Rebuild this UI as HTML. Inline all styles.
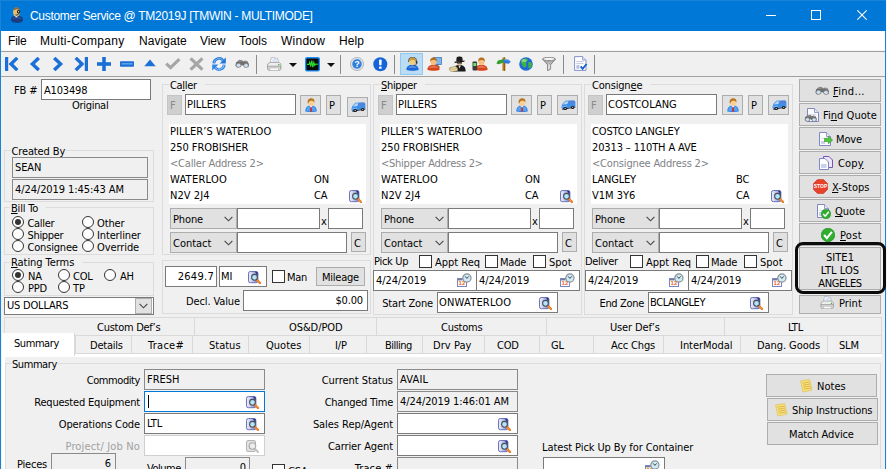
<!DOCTYPE html>
<html lang="en"><head><meta charset="utf-8"><title>Customer Service @ TM2019J [TMWIN - MULTIMODE]</title>
<style>
html,body{margin:0;padding:0;}
body{width:887px;height:469px;overflow:hidden;background:#f0f0f0;position:relative;}
#w{position:absolute;left:0;top:0;width:887px;height:469px;overflow:hidden;background:#f0f0f0;}
#w div,#w svg{position:absolute;box-sizing:border-box;}
.t{font:11px/13px "DejaVu Sans Condensed","Liberation Sans",sans-serif;color:#000;white-space:pre;letter-spacing:-0.15px;}
.g{color:#6d6d6d;}
.d{color:#a0a0a0;}
.m{font:12px/15px "Liberation Sans",sans-serif;color:#000;white-space:pre;letter-spacing:0.25px;}
.in{background:#fff;border:1px solid #7a7a7a;}
.ro{background:#f0f0f0;border:1px solid #8a8a8a;}
.dis{background:#fff;border:1px solid #cfcfcf;}
.b{background:#e1e1e1;border:1px solid #adadad;}
.gb{border:1px solid #dcdcdc;}
.lb{background:#f0f0f0;padding:0 1px;}
.wh{background:#fff;}
.cb{background:#fff;border:1px solid #333;width:13px;height:13px;}
.rb{background:#fff;border:1px solid #333;width:12px;height:12px;border-radius:50%;}
.rb i{position:absolute;left:2px;top:2px;width:6px;height:6px;border-radius:50%;background:#333;display:block;}
.tab{border:1px solid #d9d9d9;background:#f0f0f0;}
u{text-decoration:underline;text-underline-offset:1px;}
</style></head><body><div id="w">
<svg width="0" height="0" style="left:0;top:0"><defs><linearGradient id="dbg" x1="0" x2="1" y1="0" y2="0"><stop offset="0" stop-color="#eef0fa"/><stop offset="0.35" stop-color="#cfd3ee"/><stop offset="1" stop-color="#6c75c0"/></linearGradient></defs></svg>
<div class="" style="left:0px;top:0px;width:886px;height:31px;background:#0078d7;border-top:1px solid #1883d7;"></div>
<svg class="ic" style="left:11px;top:7px" width="12" height="16" viewBox="0 0 12 16"><path d="M0 12.6 C0 9.6 2.6 8.6 6 9 C9.4 8.6 12 9.6 12 12.6 C12 15 9.4 16 6 16 C2.6 16 0 15 0 12.6 Z" fill="#1b3c80"/><path d="M1.5 12 C2.5 10.4 4.4 10 6 10.2 C7.6 10 9.5 10.4 10.5 12 C9 11.4 7.5 11.2 6 11.3 C4.5 11.2 3 11.4 1.5 12 Z" fill="#3a64b4"/><path d="M3.4 8.6 L5.4 10.6 L7.4 8.6 Z" fill="#f4f0e4"/><ellipse cx="5.4" cy="5" rx="3.3" ry="4.6" fill="#e6bf6e"/><path d="M2.2 4 C2.2 1.2 3.8 0.3 5.4 0.3 C7.4 0.3 8.8 1.4 8.8 4 C7.8 2.6 6.4 2.2 5.2 2.4 C3.8 2.5 2.8 3 2.2 4 Z" fill="#8a6a3c"/><circle cx="7.6" cy="4.8" r="1.7" fill="#1a1a1a"/><circle cx="7.6" cy="4.8" r="0.7" fill="#ddd"/><path d="M7.6 6.4 C7.4 8 6 8.2 4.6 7.8" fill="none" stroke="#1a1a1a" stroke-width="0.9"/></svg>
<div class="m" style="left:30px;top:9px;color:#fff;letter-spacing:-0.3px;">Customer Service @ TM2019J [TMWIN - MULTIMODE]</div>
<div class="" style="left:766px;top:15px;width:10px;height:1px;background:#fff;"></div>
<div class="" style="left:811px;top:10px;width:10px;height:10px;border:1px solid #fff;"></div>
<svg class="ic" style="left:857px;top:10px" width="10" height="10" viewBox="0 0 10 10"><path d="M0.3 0.3 L9.7 9.7 M9.7 0.3 L0.3 9.7" stroke="#fff" stroke-width="1.1" fill="none"/></svg>
<div class="" style="left:1px;top:31px;width:884px;height:19px;background:#fff;"></div>
<div class="" style="left:1px;top:50px;width:884px;height:1px;background:#f4f4f4;"></div>
<div class="" style="left:1px;top:51px;width:884px;height:1px;background:#a0a0a0;"></div>
<div class="m" style="left:8px;top:34px;letter-spacing:-0.2px;">File</div>
<div class="m" style="left:40px;top:34px;letter-spacing:0.3px;">Multi-Company</div>
<div class="m" style="left:139px;top:34px;letter-spacing:0.05px;">Navigate</div>
<div class="m" style="left:200px;top:34px;letter-spacing:-0.1px;">View</div>
<div class="m" style="left:239px;top:34px;letter-spacing:0.0px;">Tools</div>
<div class="m" style="left:281px;top:34px;letter-spacing:0.25px;">Window</div>
<div class="m" style="left:339px;top:34px;letter-spacing:0.1px;">Help</div>
<div class="" style="left:1px;top:76px;width:884px;height:1px;background:#a0a0a0;"></div>
<svg class="ic" style="left:5px;top:57px" width="14" height="14" viewBox="0 0 14 14"><rect x="0" y="0" width="3.2" height="14" fill="#1b6fd6"/><path d="M12.3 0.9 L6 7 L12.3 13.1" fill="none" stroke="#1b6fd6" stroke-width="3.4"/></svg>
<svg class="ic" style="left:29px;top:57px" width="12" height="14" viewBox="0 0 12 14"><path d="M9.8 0.9 L3.4 7 L9.8 13.1" fill="none" stroke="#1b6fd6" stroke-width="3.4"/></svg>
<svg class="ic" style="left:52px;top:57px" width="12" height="14" viewBox="0 0 12 14"><path d="M2.2 0.9 L8.6 7 L2.2 13.1" fill="none" stroke="#1b6fd6" stroke-width="3.4"/></svg>
<svg class="ic" style="left:74px;top:57px" width="14" height="14" viewBox="0 0 14 14"><rect x="10.8" y="0" width="3.2" height="14" fill="#1b6fd6"/><path d="M1.7 0.9 L8 7 L1.7 13.1" fill="none" stroke="#1b6fd6" stroke-width="3.4"/></svg>
<svg class="ic" style="left:97px;top:57px" width="14" height="14" viewBox="0 0 14 14"><rect x="5.2" y="0" width="3.6" height="14" fill="#1b6fd6"/><rect x="0" y="5.2" width="14" height="3.6" fill="#1b6fd6"/></svg>
<svg class="ic" style="left:120px;top:61px" width="14" height="6" viewBox="0 0 14 6"><rect x="0" y="0.3" width="14" height="5.4" rx="0.8" fill="#1b6fd6"/><rect x="1.5" y="2" width="11" height="1.6" fill="#5c9ee8"/></svg>
<svg class="ic" style="left:144px;top:59px" width="12" height="8" viewBox="0 0 12 8"><path d="M0.3 7.3 L6 0.6 L11.7 7.3 Z" fill="#1b6fd6"/></svg>
<svg class="ic" style="left:165px;top:58px" width="16" height="12" viewBox="0 0 16 12"><path d="M1.2 5.6 L5.6 9.6 L14.4 1.2" fill="none" stroke="#a6a6a6" stroke-width="3.2"/></svg>
<svg class="ic" style="left:189px;top:57px" width="15" height="14" viewBox="0 0 15 14"><path d="M1.6 1.4 L13.4 12.6 M13.4 1.4 L1.6 12.6" fill="none" stroke="#a6a6a6" stroke-width="3.3"/></svg>
<svg class="ic" style="left:212px;top:57px" width="14" height="14" viewBox="0 0 14 14"><path d="M1.8 6.4 A5.2 5.2 0 0 1 11 3.4" fill="none" stroke="#1f76dc" stroke-width="2.8"/><path d="M1.8 6.4 A5.2 5.2 0 0 1 11 3.4" fill="none" stroke="#8cc4f6" stroke-width="0.9"/><path d="M13.8 0.4 L13.8 6.6 L7.6 6.6 Z" fill="#1f76dc"/><path d="M12.2 7.6 A5.2 5.2 0 0 1 3 10.6" fill="none" stroke="#2f86e6" stroke-width="2.8"/><path d="M12.2 7.6 A5.2 5.2 0 0 1 3 10.6" fill="none" stroke="#9ccdf8" stroke-width="0.9"/><path d="M0.2 13.6 L0.2 7.4 L6.4 7.4 Z" fill="#2f86e6"/></svg>
<svg class="ic" style="left:235px;top:59px" width="15" height="9" viewBox="0 0 15 9"><path d="M1 3.5 L4.5 0.8 L7 1.2 L8.5 2.5 L10 1.6 L12.5 2.2 L14 5.2 L13.6 8 L10 8.6 L8 6.4 L6.6 6 L5.6 8 L2 8.4 L0.4 6.4 Z" fill="#6e6e6e"/><path d="M2.6 2.6 L4.8 1.2 L6.6 1.6 L7.4 2.8 Z M9 2.6 L10.4 2 L12 2.6 L12.6 3.8 Z" fill="#9a9a9a"/><ellipse cx="3.6" cy="6.3" rx="2.3" ry="2" fill="#cfe4f6" stroke="#7a7a7a" stroke-width="0.6"/><ellipse cx="11" cy="6.5" rx="2.3" ry="2" fill="#cfe4f6" stroke="#7a7a7a" stroke-width="0.6"/></svg>
<div class="" style="left:256px;top:55px;width:1px;height:19px;background:#8a8a8a;"></div>
<svg class="ic" style="left:267px;top:57px" width="15" height="15" viewBox="0 0 15 15"><path d="M4.4 0.4 L10.6 1.4 L11.6 6 L3.2 6 Z" fill="#fff" stroke="#9fa6b4" stroke-width="0.7"/><path d="M5.6 2.2 L9.6 2.8 M5.2 3.8 L10 4.4" stroke="#9db7e6" stroke-width="0.6"/><path d="M0.6 7 L3 5.4 L12.2 5.4 L13.8 7 L13.8 11 L0.6 11 Z" fill="#ededed" stroke="#9a9a9a" stroke-width="0.8"/><path d="M0.6 9.2 L13.8 9.2 L13.8 12 C13.8 13 13 13.4 12 13.4 L2.4 13.4 C1.4 13.4 0.6 13 0.6 12 Z" fill="#d6d6d6" stroke="#8f8f8f" stroke-width="0.7"/><rect x="3" y="11" width="8.4" height="2.6" fill="#fbfbfb" stroke="#aaa" stroke-width="0.5"/><circle cx="11.8" cy="7.8" r="0.8" fill="#35b335"/></svg>
<svg class="ic" style="left:289px;top:63px" width="8" height="4" viewBox="0 0 8 4"><path d="M0 0 L8 0 L4 4 Z" fill="#111"/></svg>
<svg class="ic" style="left:305px;top:57px" width="15" height="15" viewBox="0 0 15 15"><rect x="0.7" y="0.7" width="13.6" height="13.2" rx="1.4" fill="#0a0a0a" stroke="#1e90ff" stroke-width="1.4"/><path d="M2 7.4 L4 7.4 L4.8 5 L5.8 9.6 L6.8 3.6 L7.8 10.2 L8.8 5.4 L9.8 8.4 L10.6 7 L13 7.2" fill="none" stroke="#2fe02f" stroke-width="1.1"/></svg>
<svg class="ic" style="left:327px;top:63px" width="8" height="4" viewBox="0 0 8 4"><path d="M0 0 L8 0 L4 4 Z" fill="#111"/></svg>
<div class="" style="left:340px;top:55px;width:1px;height:19px;background:#8a8a8a;"></div>
<svg class="ic" style="left:350px;top:57px" width="14" height="14" viewBox="0 0 14 14"><circle cx="7" cy="7" r="6.6" fill="#d8dde4" stroke="#a9b0ba" stroke-width="0.8"/><circle cx="7" cy="7" r="4.7" fill="#2f7fe0"/><text x="7" y="10" text-anchor="middle" font-size="8.5" font-weight="bold" fill="#fff" font-family="Liberation Sans,sans-serif">?</text></svg>
<svg class="ic" style="left:373px;top:57px" width="15" height="15" viewBox="0 0 15 15"><circle cx="7.3" cy="7.2" r="7" fill="#1565d8"/><rect x="6.1" y="2.6" width="2.5" height="5.6" rx="0.6" fill="#fff"/><rect x="6.1" y="9.4" width="2.5" height="2.4" rx="0.5" fill="#fff"/></svg>
<div class="" style="left:394px;top:55px;width:1px;height:19px;background:#8a8a8a;"></div>
<div class="" style="left:400px;top:53px;width:23px;height:22px;background:#bcdcf4;border:1px solid #8ec8f4;"></div>
<svg class="ic" style="left:406px;top:57px" width="14" height="14" viewBox="0 0 14 14"><path d="M0.4 12.8 C0.4 9.4 3 7.8 6.5 7.8 C10 7.8 12.6 9.4 12.6 12.8 C10 14.2 3 14.2 0.4 12.8 Z" fill="#1a66d6"/><path d="M2 11.4 C2.6 9.6 4.4 9 6.5 9 C8.6 9 10.4 9.6 11 11.4 C9 10.6 4 10.6 2 11.4 Z" fill="#ffffff" opacity="0.28"/><ellipse cx="6.5" cy="4.6" rx="3.1" ry="3.7" fill="#f3cc7c"/><path d="M3.2 4.8 C2.8 1.6 4.8 0.5 6.5 0.5 C8.4 0.5 10.2 1.6 9.8 4.6 C9 3.2 7.6 2.8 6 3 C4.6 3.2 3.8 3.8 3.2 4.8 Z" fill="#c99632"/><path d="M2.6 5 C2.4 1 4.6 0 6.5 0 C8.6 0 10.8 1 10.4 5" fill="none" stroke="#333" stroke-width="0.8"/><rect x="9.8" y="4" width="1.6" height="2.8" rx="0.6" fill="#333"/><path d="M10.6 6.8 C10.2 8.2 9 8.4 7.8 8.2" fill="none" stroke="#333" stroke-width="0.7"/></svg>
<svg class="ic" style="left:433px;top:57px" width="9" height="11" viewBox="0 0 9 11"><rect x="0.5" y="0.5" width="8" height="7" fill="#7db7f0" stroke="#4a78b8" stroke-width="0.8"/><rect x="3.5" y="7.5" width="2" height="2" fill="#666"/><rect x="2" y="9.5" width="5" height="1" fill="#666"/></svg>
<svg class="ic" style="left:427px;top:57px" width="14" height="14" viewBox="0 0 14 14"><path d="M0.4 12.8 C0.4 9.4 3 7.8 6.5 7.8 C10 7.8 12.6 9.4 12.6 12.8 C10 14.2 3 14.2 0.4 12.8 Z" fill="#d8441a"/><path d="M2 11.4 C2.6 9.6 4.4 9 6.5 9 C8.6 9 10.4 9.6 11 11.4 C9 10.6 4 10.6 2 11.4 Z" fill="#ffffff" opacity="0.28"/><ellipse cx="6.5" cy="4.6" rx="3.1" ry="3.7" fill="#f6c182"/><path d="M3.2 4.8 C2.8 1.6 4.8 0.5 6.5 0.5 C8.4 0.5 10.2 1.6 9.8 4.6 C9 3.2 7.6 2.8 6 3 C4.6 3.2 3.8 3.8 3.2 4.8 Z" fill="#b5701e"/></svg>
<svg class="ic" style="left:449px;top:56px" width="17" height="16" viewBox="0 0 17 16"><path d="M4.4 15.6 C4.2 10.6 7 9 10.5 9 C14 9 16.8 10.6 16.6 15.6 Z" fill="#1a1a1a"/><path d="M9.4 9.4 L10.6 12.4 L11.8 9.4 Z" fill="#e8e8e8"/><ellipse cx="10.4" cy="6.6" rx="2.6" ry="3" fill="#dcb888"/><path d="M5.4 5.8 L15.6 4.6 L15.4 5.8 L5.8 7 Z" fill="#141414"/><path d="M7.2 5.6 L7.6 1.6 C8.6 0.4 12 0.2 13.2 1.2 L13.8 4.8 Z" fill="#1c1c1c"/><rect x="8" y="6.2" width="5" height="1.3" fill="#2a2a2a"/><path d="M0.6 11.8 L6.2 10.2 L8.6 12 L8.6 14.8 L2.6 15.8 L0.6 14.2 Z" fill="#ead9a8" stroke="#8a7a48" stroke-width="0.6"/><path d="M0.8 12 L3 13.4 L8.4 12.2" fill="none" stroke="#a8965a" stroke-width="0.5"/></svg>
<svg class="ic" style="left:475px;top:57px" width="14" height="14" viewBox="0 0 14 14"><path d="M0.4 12.8 C0.4 9.4 3 7.8 6.5 7.8 C10 7.8 12.6 9.4 12.6 12.8 C10 14.2 3 14.2 0.4 12.8 Z" fill="#d8441a"/><path d="M2 11.4 C2.6 9.6 4.4 9 6.5 9 C8.6 9 10.4 9.6 11 11.4 C9 10.6 4 10.6 2 11.4 Z" fill="#ffffff" opacity="0.28"/><ellipse cx="6.5" cy="4.6" rx="3.1" ry="3.7" fill="#f6c182"/><path d="M3.2 4.8 C2.8 1.6 4.8 0.5 6.5 0.5 C8.4 0.5 10.2 1.6 9.8 4.6 C9 3.2 7.6 2.8 6 3 C4.6 3.2 3.8 3.8 3.2 4.8 Z" fill="#b5701e"/></svg>
<svg class="ic" style="left:472px;top:61px" width="6" height="10" viewBox="0 0 6 10"><rect x="0.5" y="0.5" width="4.6" height="9" rx="1" fill="#3a3a3a"/><rect x="1.3" y="2" width="3" height="3" fill="#6fe06f"/></svg>
<svg class="ic" style="left:496px;top:57px" width="15" height="14" viewBox="0 0 15 14"><rect x="6.4" y="0.4" width="2.8" height="13.4" rx="0.6" fill="#c4821e"/><rect x="7.8" y="0.4" width="1.4" height="13.4" fill="#9a5e10"/><path d="M0.4 6.6 L2 3.4 L8.4 2 L8.8 5 L2.8 7.2 Z" fill="#2e9e2e"/><path d="M7.4 2.2 L12.4 2.4 L14.8 4.8 L12.6 6.8 L7.8 6 Z" fill="#2e78dc"/><path d="M8 2.8 L12 3 L13.4 4.4" fill="none" stroke="#8cc0f6" stroke-width="0.6"/></svg>
<svg class="ic" style="left:519px;top:57px" width="14" height="14" viewBox="0 0 14 14"><circle cx="7" cy="7" r="6.8" fill="#1f6ad6"/><path d="M2.4 3.4 C4 1.2 7.6 0.8 8.6 2.4 C9.4 3.8 7.4 4.4 7 5.8 C6.6 7.4 8 8.2 7 9.6 C6 11 4.4 10.4 3.6 8.8 C2.8 7.2 1.4 5.4 2.4 3.4 Z" fill="#3fb53f"/><path d="M9.6 5.4 C11 4.6 13 5.6 13 7.6 C13 9.6 11.4 12 10 11.4 C8.8 10.8 9.8 9 9.4 7.8 C9.2 6.8 8.8 6 9.6 5.4 Z" fill="#3fb53f"/><ellipse cx="5" cy="3.4" rx="2.6" ry="1.5" fill="#fff" opacity="0.4"/></svg>
<svg class="ic" style="left:542px;top:57px" width="14" height="14" viewBox="0 0 14 14"><path d="M0.5 2 L13.5 2 L8.6 7.8 L8.6 12.2 L5.6 13.6 L5.6 7.8 Z" fill="#b4b4b4" stroke="#6e6e6e" stroke-width="0.8"/><path d="M6 7.6 L8.2 7.6 L8.2 11.8 L6 12.8 Z" fill="#dcdcdc"/><ellipse cx="7" cy="2" rx="6.4" ry="1.7" fill="#f4f4f4" stroke="#6e6e6e" stroke-width="0.8"/></svg>
<div class="" style="left:563px;top:55px;width:1px;height:19px;background:#8a8a8a;"></div>
<svg class="ic" style="left:574px;top:56px" width="14" height="15" viewBox="0 0 14 15"><path d="M0.6 0.6 L8.6 0.6 L12 4 L12 14.4 L0.6 14.4 Z" fill="#fff" stroke="#8490cc" stroke-width="1"/><path d="M8.6 0.6 L8.6 4 L12 4" fill="#dfe4f8" stroke="#8490cc" stroke-width="0.8"/><path d="M2.4 5.6 L9.6 5.6 M2.4 7.6 L9.6 7.6" stroke="#b4b8d8" stroke-width="0.8"/><rect x="2.4" y="9" width="3" height="3.8" fill="#b9bfe4"/><path d="M6.6 10.4 L8.6 12.8 L12.6 8" fill="none" stroke="#1a5fd0" stroke-width="1.9"/></svg>
<div class="" style="left:594px;top:55px;width:1px;height:19px;background:#8a8a8a;"></div>
<div class="" style="left:0px;top:0px;width:1px;height:469px;background:#1883d7;"></div>
<div class="" style="left:885px;top:31px;width:1px;height:438px;background:#1883d7;"></div>
<div class="" style="left:886px;top:0px;width:1px;height:469px;background:#f2f7fc;"></div>
<div class="t" style="left:14px;top:84px;letter-spacing:-0.16px;">FB #</div>
<div class="in" style="left:41px;top:79px;width:110px;height:21px;"></div>
<div class="t" style="left:44px;top:84px;letter-spacing:-0.18px;">A103498</div>
<div class="t" style="left:72px;top:99px;letter-spacing:-0.30px;">Original</div>
<div class="gb" style="left:4px;top:150px;width:150px;height:52px;"></div>
<div class="t lb" style="left:10.5px;top:145px;letter-spacing:-0.13px;">Created By</div>
<div class="ro" style="left:12px;top:157px;width:136px;height:21px;"></div>
<div class="t" style="left:15px;top:161px;letter-spacing:-0.10px;">SEAN</div>
<div class="ro" style="left:12px;top:179px;width:136px;height:21px;"></div>
<div class="t" style="left:15px;top:183px;letter-spacing:-0.08px;">4/24/2019 1:45:43 AM</div>
<div class="gb" style="left:4px;top:207px;width:150px;height:48px;"></div>
<div class="t lb" style="left:10px;top:202px;padding-right:8px;letter-spacing:-0.20px;"><u>B</u>ill To</div>
<div class="rb" style="left:12px;top:216px;"><i></i></div>
<div class="t" style="left:27.5px;top:217px;letter-spacing:-0.31px;">Caller</div>
<div class="rb" style="left:82px;top:216px;"></div>
<div class="t" style="left:97px;top:217px;letter-spacing:-0.11px;">Other</div>
<div class="rb" style="left:12px;top:228px;"></div>
<div class="t" style="left:27.5px;top:229px;letter-spacing:-0.32px;">Shipper</div>
<div class="rb" style="left:82px;top:228px;"></div>
<div class="t" style="left:97px;top:229px;letter-spacing:-0.14px;">Interliner</div>
<div class="rb" style="left:12px;top:240px;"></div>
<div class="t" style="left:27.5px;top:241px;letter-spacing:-0.18px;">Consignee</div>
<div class="rb" style="left:82px;top:240px;"></div>
<div class="t" style="left:97px;top:241px;letter-spacing:-0.09px;">Override</div>
<div class="gb" style="left:4px;top:262px;width:150px;height:34px;"></div>
<div class="t lb" style="left:10px;top:256px;padding-right:8px;letter-spacing:-0.06px;"><u>R</u>ating Terms</div>
<div class="rb" style="left:12px;top:269px;"><i></i></div>
<div class="t" style="left:28px;top:270px;">NA</div>
<div class="rb" style="left:58px;top:269px;"></div>
<div class="t" style="left:73px;top:270px;letter-spacing:-0.22px;">COL</div>
<div class="rb" style="left:104px;top:269px;"></div>
<div class="t" style="left:120px;top:270px;">AH</div>
<div class="rb" style="left:12px;top:281px;"></div>
<div class="t" style="left:28px;top:282px;letter-spacing:-0.17px;">PPD</div>
<div class="rb" style="left:58px;top:281px;"></div>
<div class="t" style="left:73px;top:282px;">TP</div>
<div class="in" style="left:4px;top:297px;width:150px;height:18px;"></div>
<div class="t" style="left:7px;top:299px;letter-spacing:-0.20px;">US DOLLARS</div>
<div class="b" style="left:135px;top:298px;width:17px;height:16px;border-color:#adadad;"></div>
<svg class="ic" style="left:139px;top:303px" width="9" height="6" viewBox="0 0 9 6"><path d="M0.6 0.8 L4.5 4.8 L8.4 0.8" fill="none" stroke="#444" stroke-width="1.1"/></svg>
<div class="gb" style="left:162px;top:84px;width:209px;height:171px;"></div>
<div class="t lb" style="left:169px;top:79px;padding-right:8px;letter-spacing:-0.31px;">Ca<u>l</u>ler</div>
<div class="b" style="left:167px;top:95px;width:15px;height:20px;background:#cfcfcf;border-color:#c4c4c4;"></div>
<div class="t g" style="left:170px;top:99px;color:#8a8a8a;">F</div>
<div class="in" style="left:185px;top:94px;width:111px;height:21px;"></div>
<div class="t" style="left:187px;top:98px;letter-spacing:-0.04px;">PILLERS</div>
<div class="b" style="left:300px;top:95px;width:21px;height:20px;"></div>
<svg class="ic" style="left:305px;top:98px" width="12" height="14" viewBox="0 0 12 14"><path d="M0.3 13.6 C0.2 9.6 2.2 7.4 6 7.2 C9.8 7.4 11.8 9.6 11.7 13.6 C9 14.2 3 14.2 0.3 13.6 Z" fill="#2f86e8"/><path d="M1.4 12.8 C1.4 10 2.6 8.6 4.4 8.2 L5.2 12.8 Z M10.6 12.8 C10.6 10 9.4 8.6 7.6 8.2 L6.8 12.8 Z" fill="#5aa5f2"/><path d="M4.2 7.6 L6 10 L7.8 7.6 Z" fill="#fff"/><path d="M5.5 8.8 L6.5 8.8 L7 13 L6 14 L5 13 Z" fill="#e8281a"/><ellipse cx="6.2" cy="4.6" rx="3" ry="3.5" fill="#fbcf96"/><path d="M2.8 5.2 C2 1.6 4.2 0.2 6.2 0.2 C8.4 0.2 10 1.6 9.4 4.4 C8.6 3 7.4 2.6 6 2.8 C4.6 3 3.6 3.8 3.4 5.6 Z" fill="#b8761e"/></svg>
<div class="b" style="left:326px;top:95px;width:15px;height:20px;"></div>
<div class="t" style="left:329px;top:99px;">P</div>
<div class="b" style="left:347px;top:97px;width:21px;height:20px;"></div>
<svg class="ic" style="left:351px;top:102px" width="15" height="10" viewBox="0 0 15 10"><path d="M0.4 7 L1.4 4 L4.4 0.8 L12.4 0.2 C13.8 0.2 14.4 1.2 14.4 2.6 L14.4 6.6 L1 9 Z" fill="#3f8fe8"/><path d="M1 9 L14.4 6.6 L14.4 7.6 L1.6 9.8 Z" fill="#1d2a44"/><path d="M1.8 4.4 L4.6 1.4 L7.2 1.2 L6.4 4 Z" fill="#b4d8fa"/><path d="M8 1.2 L13 0.9 L13.2 3 L7.6 3.6 Z" fill="#5b7fd8"/><path d="M0.6 6.4 L6 5.4 L6 6.4 L0.6 7.4 Z" fill="#7fb8f4"/><ellipse cx="4.2" cy="8.6" rx="1.9" ry="1.5" fill="#161616"/><ellipse cx="11.6" cy="7.5" rx="1.7" ry="1.5" fill="#161616"/><ellipse cx="4.2" cy="8.6" rx="0.8" ry="0.6" fill="#c8c8c8"/><ellipse cx="11.6" cy="7.5" rx="0.7" ry="0.6" fill="#c8c8c8"/></svg>
<div class="wh" style="left:169px;top:124px;width:197px;height:80px;"></div>
<div class="t" style="left:170px;top:125px;letter-spacing:0.04px;">PILLER’S WATERLOO</div>
<div class="t" style="left:170px;top:141px;letter-spacing:-0.05px;">250 FROBISHER</div>
<div class="t g" style="left:170px;top:157px;color:#808285;letter-spacing:-0.19px;">&lt;Caller Address 2&gt;</div>
<div class="t" style="left:170px;top:173px;letter-spacing:0.26px;">WATERLOO</div>
<div class="t" style="left:170px;top:189px;letter-spacing:0.06px;">N2V 2J4</div>
<div class="t" style="left:314px;top:173px;">ON</div>
<div class="t" style="left:314px;top:189px;">CA</div>
<svg class="ic" style="left:349px;top:190px" width="13" height="13" viewBox="0 0 13 13"><rect x="0.5" y="0.5" width="9.4" height="11.2" rx="1.8" fill="url(#dbg)" stroke="#6a73bc"/><path d="M7 0.8 L9 0.8 L9.6 1.6 L9.6 5 Z" fill="#2c3784"/><line x1="9" y1="9" x2="12" y2="12" stroke="#ee7a22" stroke-width="2.4" stroke-linecap="round"/><line x1="9.6" y1="9.6" x2="11.8" y2="11.8" stroke="#f8c83c" stroke-width="0.8" stroke-dasharray="0.8 0.8"/><circle cx="6.5" cy="6.3" r="2.9" fill="#b4e4f8" stroke="#4a4f5c" stroke-width="1.1"/></svg>
<div class="b" style="left:170px;top:208px;width:67px;height:21px;"></div>
<div class="t" style="left:173px;top:213px;letter-spacing:-0.12px;">Phone</div>
<svg class="ic" style="left:224px;top:216px" width="9" height="6" viewBox="0 0 9 6"><path d="M0.6 0.8 L4.5 4.8 L8.4 0.8" fill="none" stroke="#444" stroke-width="1.1"/></svg>
<div class="in" style="left:237px;top:208px;width:83px;height:21px;"></div>
<div class="t" style="left:321px;top:215px;">x</div>
<div class="in" style="left:328px;top:208px;width:35px;height:21px;"></div>
<div class="b" style="left:170px;top:232px;width:67px;height:21px;"></div>
<div class="t" style="left:173px;top:237px;letter-spacing:-0.03px;">Contact</div>
<svg class="ic" style="left:224px;top:240px" width="9" height="6" viewBox="0 0 9 6"><path d="M0.6 0.8 L4.5 4.8 L8.4 0.8" fill="none" stroke="#444" stroke-width="1.1"/></svg>
<div class="in" style="left:237px;top:232px;width:110px;height:21px;"></div>
<div class="b" style="left:351px;top:232px;width:15px;height:20px;"></div>
<div class="t" style="left:354px;top:237px;">C</div>
<div class="gb" style="left:373px;top:84px;width:209px;height:231px;"></div>
<div class="t lb" style="left:380px;top:79px;padding-right:8px;letter-spacing:-0.32px;"><u>S</u>hipper</div>
<div class="b" style="left:378px;top:95px;width:15px;height:20px;background:#cfcfcf;border-color:#c4c4c4;"></div>
<div class="t g" style="left:381px;top:99px;color:#8a8a8a;">F</div>
<div class="in" style="left:396px;top:94px;width:111px;height:21px;"></div>
<div class="t" style="left:398px;top:98px;letter-spacing:-0.04px;">PILLERS</div>
<div class="b" style="left:511px;top:95px;width:21px;height:20px;"></div>
<svg class="ic" style="left:516px;top:98px" width="12" height="14" viewBox="0 0 12 14"><path d="M0.3 13.6 C0.2 9.6 2.2 7.4 6 7.2 C9.8 7.4 11.8 9.6 11.7 13.6 C9 14.2 3 14.2 0.3 13.6 Z" fill="#2f86e8"/><path d="M1.4 12.8 C1.4 10 2.6 8.6 4.4 8.2 L5.2 12.8 Z M10.6 12.8 C10.6 10 9.4 8.6 7.6 8.2 L6.8 12.8 Z" fill="#5aa5f2"/><path d="M4.2 7.6 L6 10 L7.8 7.6 Z" fill="#fff"/><path d="M5.5 8.8 L6.5 8.8 L7 13 L6 14 L5 13 Z" fill="#e8281a"/><ellipse cx="6.2" cy="4.6" rx="3" ry="3.5" fill="#fbcf96"/><path d="M2.8 5.2 C2 1.6 4.2 0.2 6.2 0.2 C8.4 0.2 10 1.6 9.4 4.4 C8.6 3 7.4 2.6 6 2.8 C4.6 3 3.6 3.8 3.4 5.6 Z" fill="#b8761e"/></svg>
<div class="b" style="left:537px;top:95px;width:15px;height:20px;"></div>
<div class="t" style="left:540px;top:99px;">P</div>
<div class="b" style="left:557px;top:95px;width:21px;height:20px;"></div>
<svg class="ic" style="left:561px;top:100px" width="15" height="10" viewBox="0 0 15 10"><path d="M0.4 7 L1.4 4 L4.4 0.8 L12.4 0.2 C13.8 0.2 14.4 1.2 14.4 2.6 L14.4 6.6 L1 9 Z" fill="#3f8fe8"/><path d="M1 9 L14.4 6.6 L14.4 7.6 L1.6 9.8 Z" fill="#1d2a44"/><path d="M1.8 4.4 L4.6 1.4 L7.2 1.2 L6.4 4 Z" fill="#b4d8fa"/><path d="M8 1.2 L13 0.9 L13.2 3 L7.6 3.6 Z" fill="#5b7fd8"/><path d="M0.6 6.4 L6 5.4 L6 6.4 L0.6 7.4 Z" fill="#7fb8f4"/><ellipse cx="4.2" cy="8.6" rx="1.9" ry="1.5" fill="#161616"/><ellipse cx="11.6" cy="7.5" rx="1.7" ry="1.5" fill="#161616"/><ellipse cx="4.2" cy="8.6" rx="0.8" ry="0.6" fill="#c8c8c8"/><ellipse cx="11.6" cy="7.5" rx="0.7" ry="0.6" fill="#c8c8c8"/></svg>
<div class="wh" style="left:380px;top:124px;width:197px;height:80px;"></div>
<div class="t" style="left:381px;top:125px;letter-spacing:0.04px;">PILLER’S WATERLOO</div>
<div class="t" style="left:381px;top:141px;letter-spacing:-0.05px;">250 FROBISHER</div>
<div class="t g" style="left:381px;top:157px;color:#808285;letter-spacing:-0.25px;">&lt;Shipper Address 2&gt;</div>
<div class="t" style="left:381px;top:173px;letter-spacing:0.26px;">WATERLOO</div>
<div class="t" style="left:381px;top:189px;letter-spacing:0.06px;">N2V 2J4</div>
<div class="t" style="left:525px;top:173px;">ON</div>
<div class="t" style="left:525px;top:189px;">CA</div>
<svg class="ic" style="left:560px;top:190px" width="13" height="13" viewBox="0 0 13 13"><rect x="0.5" y="0.5" width="9.4" height="11.2" rx="1.8" fill="url(#dbg)" stroke="#6a73bc"/><path d="M7 0.8 L9 0.8 L9.6 1.6 L9.6 5 Z" fill="#2c3784"/><line x1="9" y1="9" x2="12" y2="12" stroke="#ee7a22" stroke-width="2.4" stroke-linecap="round"/><line x1="9.6" y1="9.6" x2="11.8" y2="11.8" stroke="#f8c83c" stroke-width="0.8" stroke-dasharray="0.8 0.8"/><circle cx="6.5" cy="6.3" r="2.9" fill="#b4e4f8" stroke="#4a4f5c" stroke-width="1.1"/></svg>
<div class="b" style="left:381px;top:208px;width:67px;height:21px;"></div>
<div class="t" style="left:384px;top:213px;letter-spacing:-0.12px;">Phone</div>
<svg class="ic" style="left:435px;top:216px" width="9" height="6" viewBox="0 0 9 6"><path d="M0.6 0.8 L4.5 4.8 L8.4 0.8" fill="none" stroke="#444" stroke-width="1.1"/></svg>
<div class="in" style="left:448px;top:208px;width:83px;height:21px;"></div>
<div class="t" style="left:532px;top:215px;">x</div>
<div class="in" style="left:539px;top:208px;width:35px;height:21px;"></div>
<div class="b" style="left:381px;top:232px;width:67px;height:21px;"></div>
<div class="t" style="left:384px;top:237px;letter-spacing:-0.03px;">Contact</div>
<svg class="ic" style="left:435px;top:240px" width="9" height="6" viewBox="0 0 9 6"><path d="M0.6 0.8 L4.5 4.8 L8.4 0.8" fill="none" stroke="#444" stroke-width="1.1"/></svg>
<div class="in" style="left:448px;top:232px;width:110px;height:21px;"></div>
<div class="b" style="left:562px;top:232px;width:15px;height:20px;"></div>
<div class="t" style="left:565px;top:237px;">C</div>
<div class="gb" style="left:584px;top:84px;width:209px;height:231px;"></div>
<div class="t lb" style="left:591px;top:79px;padding-right:8px;letter-spacing:-0.18px;">Consign<u>e</u>e</div>
<div class="b" style="left:588px;top:95px;width:15px;height:20px;background:#cfcfcf;border-color:#c4c4c4;"></div>
<div class="t g" style="left:591px;top:99px;color:#8a8a8a;">F</div>
<div class="in" style="left:606px;top:94px;width:111px;height:21px;"></div>
<div class="t" style="left:608px;top:98px;letter-spacing:0.01px;">COSTCOLANG</div>
<div class="b" style="left:722px;top:95px;width:21px;height:20px;"></div>
<svg class="ic" style="left:727px;top:98px" width="12" height="14" viewBox="0 0 12 14"><path d="M0.3 13.6 C0.2 9.6 2.2 7.4 6 7.2 C9.8 7.4 11.8 9.6 11.7 13.6 C9 14.2 3 14.2 0.3 13.6 Z" fill="#2f86e8"/><path d="M1.4 12.8 C1.4 10 2.6 8.6 4.4 8.2 L5.2 12.8 Z M10.6 12.8 C10.6 10 9.4 8.6 7.6 8.2 L6.8 12.8 Z" fill="#5aa5f2"/><path d="M4.2 7.6 L6 10 L7.8 7.6 Z" fill="#fff"/><path d="M5.5 8.8 L6.5 8.8 L7 13 L6 14 L5 13 Z" fill="#e8281a"/><ellipse cx="6.2" cy="4.6" rx="3" ry="3.5" fill="#fbcf96"/><path d="M2.8 5.2 C2 1.6 4.2 0.2 6.2 0.2 C8.4 0.2 10 1.6 9.4 4.4 C8.6 3 7.4 2.6 6 2.8 C4.6 3 3.6 3.8 3.4 5.6 Z" fill="#b8761e"/></svg>
<div class="b" style="left:748px;top:95px;width:15px;height:20px;"></div>
<div class="t" style="left:751px;top:99px;">P</div>
<div class="b" style="left:768px;top:95px;width:21px;height:20px;"></div>
<svg class="ic" style="left:772px;top:100px" width="15" height="10" viewBox="0 0 15 10"><path d="M0.4 7 L1.4 4 L4.4 0.8 L12.4 0.2 C13.8 0.2 14.4 1.2 14.4 2.6 L14.4 6.6 L1 9 Z" fill="#3f8fe8"/><path d="M1 9 L14.4 6.6 L14.4 7.6 L1.6 9.8 Z" fill="#1d2a44"/><path d="M1.8 4.4 L4.6 1.4 L7.2 1.2 L6.4 4 Z" fill="#b4d8fa"/><path d="M8 1.2 L13 0.9 L13.2 3 L7.6 3.6 Z" fill="#5b7fd8"/><path d="M0.6 6.4 L6 5.4 L6 6.4 L0.6 7.4 Z" fill="#7fb8f4"/><ellipse cx="4.2" cy="8.6" rx="1.9" ry="1.5" fill="#161616"/><ellipse cx="11.6" cy="7.5" rx="1.7" ry="1.5" fill="#161616"/><ellipse cx="4.2" cy="8.6" rx="0.8" ry="0.6" fill="#c8c8c8"/><ellipse cx="11.6" cy="7.5" rx="0.7" ry="0.6" fill="#c8c8c8"/></svg>
<div class="wh" style="left:591px;top:124px;width:197px;height:80px;"></div>
<div class="t" style="left:592px;top:125px;letter-spacing:-0.15px;">COSTCO LANGLEY</div>
<div class="t" style="left:592px;top:141px;letter-spacing:-0.13px;">20313 – 110TH A AVE</div>
<div class="t g" style="left:592px;top:157px;color:#808285;letter-spacing:-0.17px;">&lt;Consignee Address 2&gt;</div>
<div class="t" style="left:592px;top:173px;letter-spacing:-0.23px;">LANGLEY</div>
<div class="t" style="left:592px;top:189px;letter-spacing:0.00px;">V1M 3Y6</div>
<div class="t" style="left:736px;top:173px;">BC</div>
<div class="t" style="left:736px;top:189px;">CA</div>
<svg class="ic" style="left:771px;top:190px" width="13" height="13" viewBox="0 0 13 13"><rect x="0.5" y="0.5" width="9.4" height="11.2" rx="1.8" fill="url(#dbg)" stroke="#6a73bc"/><path d="M7 0.8 L9 0.8 L9.6 1.6 L9.6 5 Z" fill="#2c3784"/><line x1="9" y1="9" x2="12" y2="12" stroke="#ee7a22" stroke-width="2.4" stroke-linecap="round"/><line x1="9.6" y1="9.6" x2="11.8" y2="11.8" stroke="#f8c83c" stroke-width="0.8" stroke-dasharray="0.8 0.8"/><circle cx="6.5" cy="6.3" r="2.9" fill="#b4e4f8" stroke="#4a4f5c" stroke-width="1.1"/></svg>
<div class="b" style="left:592px;top:208px;width:67px;height:21px;"></div>
<div class="t" style="left:595px;top:213px;letter-spacing:-0.12px;">Phone</div>
<svg class="ic" style="left:646px;top:216px" width="9" height="6" viewBox="0 0 9 6"><path d="M0.6 0.8 L4.5 4.8 L8.4 0.8" fill="none" stroke="#444" stroke-width="1.1"/></svg>
<div class="in" style="left:659px;top:208px;width:83px;height:21px;"></div>
<div class="t" style="left:743px;top:215px;">x</div>
<div class="in" style="left:750px;top:208px;width:35px;height:21px;"></div>
<div class="b" style="left:592px;top:232px;width:67px;height:21px;"></div>
<div class="t" style="left:595px;top:237px;letter-spacing:-0.03px;">Contact</div>
<svg class="ic" style="left:646px;top:240px" width="9" height="6" viewBox="0 0 9 6"><path d="M0.6 0.8 L4.5 4.8 L8.4 0.8" fill="none" stroke="#444" stroke-width="1.1"/></svg>
<div class="in" style="left:659px;top:232px;width:110px;height:21px;"></div>
<div class="b" style="left:773px;top:232px;width:15px;height:20px;"></div>
<div class="t" style="left:776px;top:237px;">C</div>
<div class="gb" style="left:162px;top:260px;width:209px;height:54px;"></div>
<div class="in" style="left:165px;top:266px;width:52px;height:21px;"></div>
<div class="t" style="right:673px;top:270px;letter-spacing:0.28px;">2649.7</div>
<div class="in" style="left:219px;top:266px;width:48px;height:21px;"></div>
<div class="t" style="left:221px;top:270px;">MI</div>
<svg class="ic" style="left:248px;top:271px" width="13" height="13" viewBox="0 0 13 13"><rect x="0.5" y="0.5" width="9.4" height="11.2" rx="1.8" fill="url(#dbg)" stroke="#6a73bc"/><path d="M7 0.8 L9 0.8 L9.6 1.6 L9.6 5 Z" fill="#2c3784"/><line x1="9" y1="9" x2="12" y2="12" stroke="#ee7a22" stroke-width="2.4" stroke-linecap="round"/><line x1="9.6" y1="9.6" x2="11.8" y2="11.8" stroke="#f8c83c" stroke-width="0.8" stroke-dasharray="0.8 0.8"/><circle cx="6.5" cy="6.3" r="2.9" fill="#b4e4f8" stroke="#4a4f5c" stroke-width="1.1"/></svg>
<div class="cb" style="left:272px;top:270px;width:13px;height:13px;"></div>
<div class="t" style="left:287px;top:271px;letter-spacing:-0.28px;">Man</div>
<div class="b" style="left:316px;top:267px;width:49px;height:19px;"></div>
<div class="t" style="left:322px;top:271px;letter-spacing:-0.25px;">Mileage</div>
<div class="t" style="left:186px;top:295px;letter-spacing:-0.13px;">Decl. Value</div>
<div class="in" style="left:243px;top:290px;width:125px;height:21px;"></div>
<div class="t" style="right:524px;top:294px;letter-spacing:-0.16px;">$0.00</div>
<div class="t" style="left:374px;top:255px;letter-spacing:-0.29px;">Pick Up</div>
<div class="cb" style="left:419px;top:255px;width:13px;height:13px;"></div>
<div class="t" style="left:435px;top:256px;letter-spacing:-0.01px;">Appt Req</div>
<div class="cb" style="left:485px;top:255px;width:13px;height:13px;"></div>
<div class="t" style="left:500px;top:256px;letter-spacing:-0.23px;">Made</div>
<div class="cb" style="left:533px;top:255px;width:13px;height:13px;"></div>
<div class="t" style="left:549px;top:256px;letter-spacing:0.01px;">Spot</div>
<div class="in" style="left:373px;top:270px;width:104px;height:21px;"></div>
<div class="t" style="left:376px;top:274px;letter-spacing:-0.07px;">4/24/2019</div>
<svg class="ic" style="left:457px;top:273px" width="15" height="15" viewBox="0 0 15 15"><rect x="0.5" y="5.5" width="9" height="8" fill="#fff" stroke="#7b86c8"/><rect x="1" y="6" width="4.6" height="1.4" fill="#777c8c"/><text x="1.6" y="12.3" font-size="6" font-weight="bold" fill="#f0641e" font-family="Liberation Sans,sans-serif">12</text><circle cx="9.9" cy="5" r="4.1" fill="#cdeaf6" stroke="#8a9096" stroke-width="1.2"/><path d="M8.2 3.4 L9.9 5.4 L11.7 3.4" fill="none" stroke="#444" stroke-width="1"/></svg>
<div class="in" style="left:476px;top:270px;width:104px;height:21px;"></div>
<div class="t" style="left:479px;top:274px;letter-spacing:-0.07px;">4/24/2019</div>
<svg class="ic" style="left:560px;top:273px" width="15" height="15" viewBox="0 0 15 15"><rect x="0.5" y="5.5" width="9" height="8" fill="#fff" stroke="#7b86c8"/><rect x="1" y="6" width="4.6" height="1.4" fill="#777c8c"/><text x="1.6" y="12.3" font-size="6" font-weight="bold" fill="#f0641e" font-family="Liberation Sans,sans-serif">12</text><circle cx="9.9" cy="5" r="4.1" fill="#cdeaf6" stroke="#8a9096" stroke-width="1.2"/><path d="M8.2 3.4 L9.9 5.4 L11.7 3.4" fill="none" stroke="#444" stroke-width="1"/></svg>
<div class="t" style="right:454px;top:297px;letter-spacing:-0.17px;">Start Zone</div>
<div class="in" style="left:437px;top:292px;width:121px;height:21px;"></div>
<div class="t" style="left:439px;top:296px;letter-spacing:0.21px;">ONWATERLOO</div>
<svg class="ic" style="left:539px;top:297px" width="13" height="13" viewBox="0 0 13 13"><rect x="0.5" y="0.5" width="9.4" height="11.2" rx="1.8" fill="url(#dbg)" stroke="#6a73bc"/><path d="M7 0.8 L9 0.8 L9.6 1.6 L9.6 5 Z" fill="#2c3784"/><line x1="9" y1="9" x2="12" y2="12" stroke="#ee7a22" stroke-width="2.4" stroke-linecap="round"/><line x1="9.6" y1="9.6" x2="11.8" y2="11.8" stroke="#f8c83c" stroke-width="0.8" stroke-dasharray="0.8 0.8"/><circle cx="6.5" cy="6.3" r="2.9" fill="#b4e4f8" stroke="#4a4f5c" stroke-width="1.1"/></svg>
<div class="t" style="left:585px;top:255px;letter-spacing:-0.35px;">Deliver</div>
<div class="cb" style="left:630px;top:255px;width:13px;height:13px;"></div>
<div class="t" style="left:646px;top:256px;letter-spacing:-0.01px;">Appt Req</div>
<div class="cb" style="left:696px;top:255px;width:13px;height:13px;"></div>
<div class="t" style="left:711px;top:256px;letter-spacing:-0.23px;">Made</div>
<div class="cb" style="left:744px;top:255px;width:13px;height:13px;"></div>
<div class="t" style="left:760px;top:256px;letter-spacing:0.01px;">Spot</div>
<div class="in" style="left:585px;top:270px;width:104px;height:21px;"></div>
<div class="t" style="left:588px;top:274px;letter-spacing:-0.07px;">4/24/2019</div>
<svg class="ic" style="left:669px;top:273px" width="15" height="15" viewBox="0 0 15 15"><rect x="0.5" y="5.5" width="9" height="8" fill="#fff" stroke="#7b86c8"/><rect x="1" y="6" width="4.6" height="1.4" fill="#777c8c"/><text x="1.6" y="12.3" font-size="6" font-weight="bold" fill="#f0641e" font-family="Liberation Sans,sans-serif">12</text><circle cx="9.9" cy="5" r="4.1" fill="#cdeaf6" stroke="#8a9096" stroke-width="1.2"/><path d="M8.2 3.4 L9.9 5.4 L11.7 3.4" fill="none" stroke="#444" stroke-width="1"/></svg>
<div class="in" style="left:688px;top:270px;width:104px;height:21px;"></div>
<div class="t" style="left:691px;top:274px;letter-spacing:-0.07px;">4/24/2019</div>
<svg class="ic" style="left:772px;top:273px" width="15" height="15" viewBox="0 0 15 15"><rect x="0.5" y="5.5" width="9" height="8" fill="#fff" stroke="#7b86c8"/><rect x="1" y="6" width="4.6" height="1.4" fill="#777c8c"/><text x="1.6" y="12.3" font-size="6" font-weight="bold" fill="#f0641e" font-family="Liberation Sans,sans-serif">12</text><circle cx="9.9" cy="5" r="4.1" fill="#cdeaf6" stroke="#8a9096" stroke-width="1.2"/><path d="M8.2 3.4 L9.9 5.4 L11.7 3.4" fill="none" stroke="#444" stroke-width="1"/></svg>
<div class="t" style="right:243px;top:297px;letter-spacing:-0.33px;">End Zone</div>
<div class="in" style="left:648px;top:292px;width:121px;height:21px;"></div>
<div class="t" style="left:650px;top:296px;letter-spacing:-0.43px;">BCLANGLEY</div>
<svg class="ic" style="left:750px;top:297px" width="13" height="13" viewBox="0 0 13 13"><rect x="0.5" y="0.5" width="9.4" height="11.2" rx="1.8" fill="url(#dbg)" stroke="#6a73bc"/><path d="M7 0.8 L9 0.8 L9.6 1.6 L9.6 5 Z" fill="#2c3784"/><line x1="9" y1="9" x2="12" y2="12" stroke="#ee7a22" stroke-width="2.4" stroke-linecap="round"/><line x1="9.6" y1="9.6" x2="11.8" y2="11.8" stroke="#f8c83c" stroke-width="0.8" stroke-dasharray="0.8 0.8"/><circle cx="6.5" cy="6.3" r="2.9" fill="#b4e4f8" stroke="#4a4f5c" stroke-width="1.1"/></svg>
<div class="b" style="left:799px;top:79px;width:82px;height:23px;"></div>
<div class="t" style="left:833px;top:85px;letter-spacing:0.31px;"><u>F</u>ind...</div>
<svg class="ic" style="left:815px;top:86px" width="15" height="9" viewBox="0 0 15 9"><path d="M1 3.5 L4.5 0.8 L7 1.2 L8.5 2.5 L10 1.6 L12.5 2.2 L14 5.2 L13.6 8 L10 8.6 L8 6.4 L6.6 6 L5.6 8 L2 8.4 L0.4 6.4 Z" fill="#6e6e6e"/><path d="M2.6 2.6 L4.8 1.2 L6.6 1.6 L7.4 2.8 Z M9 2.6 L10.4 2 L12 2.6 L12.6 3.8 Z" fill="#9a9a9a"/><ellipse cx="3.6" cy="6.3" rx="2.3" ry="2" fill="#cfe4f6" stroke="#7a7a7a" stroke-width="0.6"/><ellipse cx="11" cy="6.5" rx="2.3" ry="2" fill="#cfe4f6" stroke="#7a7a7a" stroke-width="0.6"/></svg>
<div class="b" style="left:799px;top:103px;width:82px;height:23px;"></div>
<div class="t" style="left:823px;top:109px;letter-spacing:0.04px;">Fi<u>n</u>d Quote</div>
<svg class="ic" style="left:807px;top:108px" width="12" height="14" viewBox="0 0 12 14"><path d="M0.5 0.5 L7.5 0.5 L11.5 4.5 L11.5 13.5 L0.5 13.5 Z" fill="#fdfdff" stroke="#7f88c2" stroke-width="1"/><path d="M7.5 0.5 L7.5 4.5 L11.5 4.5" fill="#e4e8fa" stroke="#7f88c2" stroke-width="0.8"/><path d="M2.4 6.4 L9.4 6.4" stroke="#c6cae6" stroke-width="0.8"/></svg>
<svg class="ic" style="left:804px;top:114px" width="14" height="8" viewBox="0 0 15 9"><path d="M1 3.5 L4.5 0.8 L7 1.2 L8.5 2.5 L10 1.6 L12.5 2.2 L14 5.2 L13.6 8 L10 8.6 L8 6.4 L6.6 6 L5.6 8 L2 8.4 L0.4 6.4 Z" fill="#6e6e6e"/><path d="M2.6 2.6 L4.8 1.2 L6.6 1.6 L7.4 2.8 Z M9 2.6 L10.4 2 L12 2.6 L12.6 3.8 Z" fill="#9a9a9a"/><ellipse cx="3.6" cy="6.3" rx="2.3" ry="2" fill="#cfe4f6" stroke="#7a7a7a" stroke-width="0.6"/><ellipse cx="11" cy="6.5" rx="2.3" ry="2" fill="#cfe4f6" stroke="#7a7a7a" stroke-width="0.6"/></svg>
<div class="b" style="left:799px;top:127px;width:82px;height:23px;"></div>
<div class="t" style="left:836px;top:133px;letter-spacing:-0.14px;">Move</div>
<svg class="ic" style="left:819px;top:132px" width="12" height="14" viewBox="0 0 12 14"><path d="M0.5 0.5 L7.5 0.5 L11.5 4.5 L11.5 13.5 L0.5 13.5 Z" fill="#fdfdff" stroke="#7f88c2" stroke-width="1"/><path d="M7.5 0.5 L7.5 4.5 L11.5 4.5" fill="#e4e8fa" stroke="#7f88c2" stroke-width="0.8"/><path d="M2.4 6.4 L9.4 6.4" stroke="#c6cae6" stroke-width="0.8"/><rect x="2" y="9" width="4" height="3" fill="#c9d0ee"/></svg>
<svg class="ic" style="left:824px;top:136px" width="9" height="8" viewBox="0 0 9 8"><path d="M0.4 2.4 L4.4 2.4 L4.4 0.2 L8.6 4 L4.4 7.8 L4.4 5.6 L0.4 5.6 Z" fill="#4cc83a" stroke="#2a8f22" stroke-width="0.6"/></svg>
<div class="b" style="left:799px;top:151px;width:82px;height:23px;"></div>
<div class="t" style="left:838px;top:157px;letter-spacing:0.12px;">Cop<u>y</u></div>
<svg class="ic" style="left:823px;top:156px" width="10" height="12" viewBox="0 0 10 12"><path d="M0.5 0.5 L6 0.5 L9.5 4 L9.5 11.5 L0.5 11.5 Z" fill="#ece6f6" stroke="#7a52b0" stroke-width="1"/></svg>
<svg class="ic" style="left:819px;top:158px" width="10" height="12" viewBox="0 0 10 12"><path d="M0.5 0.5 L6 0.5 L9.5 4 L9.5 11.5 L0.5 11.5 Z" fill="#fdfdff" stroke="#7f88c2" stroke-width="1"/><rect x="2" y="6" width="5.5" height="4" fill="#c9d0ee"/></svg>
<div class="b" style="left:799px;top:175px;width:82px;height:23px;"></div>
<div class="t" style="left:832px;top:181px;letter-spacing:0.00px;"><u>X</u>-Stops</div>
<svg class="ic" style="left:813px;top:179px" width="15" height="15" viewBox="0 0 15 15"><path d="M4.6 0.4 L10.4 0.4 L14.6 4.6 L14.6 10.4 L10.4 14.6 L4.6 14.6 L0.4 10.4 L0.4 4.6 Z" fill="#e8412c" stroke="#c0301e" stroke-width="0.6"/><text x="7.5" y="9.4" text-anchor="middle" font-size="5" font-weight="bold" fill="#fff" font-family="Liberation Sans,sans-serif">STOP</text></svg>
<div class="b" style="left:799px;top:199px;width:82px;height:23px;"></div>
<div class="t" style="left:835px;top:205px;letter-spacing:0.02px;"><u>Q</u>uote</div>
<svg class="ic" style="left:817px;top:204px" width="12" height="14" viewBox="0 0 12 14"><path d="M0.5 0.5 L7.5 0.5 L11.5 4.5 L11.5 13.5 L0.5 13.5 Z" fill="#fdfdff" stroke="#7f88c2" stroke-width="1"/><path d="M7.5 0.5 L7.5 4.5 L11.5 4.5" fill="#e4e8fa" stroke="#7f88c2" stroke-width="0.8"/><path d="M2.4 6.4 L9.4 6.4" stroke="#c6cae6" stroke-width="0.8"/><rect x="2" y="8" width="3" height="4" fill="#c9d0ee"/></svg>
<svg class="ic" style="left:821px;top:209px" width="10" height="10" viewBox="0 0 10 10"><circle cx="5" cy="5" r="4.8" fill="#2fae2f" stroke="#1f8a1f" stroke-width="0.5"/><path d="M2.2 5 L4.2 7.2 L7.8 2.8" fill="none" stroke="#fff" stroke-width="1.5"/></svg>
<div class="b" style="left:799px;top:223px;width:82px;height:23px;"></div>
<div class="t" style="left:840px;top:229px;letter-spacing:0.28px;"><u>P</u>ost</div>
<svg class="ic" style="left:821px;top:228px" width="14" height="14" viewBox="0 0 10 10"><circle cx="5" cy="5" r="4.8" fill="#2fae2f" stroke="#1f8a1f" stroke-width="0.5"/><path d="M2.2 5 L4.2 7.2 L7.8 2.8" fill="none" stroke="#fff" stroke-width="1.5"/></svg>
<div class="b" style="left:799px;top:295px;width:82px;height:19px;"></div>
<svg class="ic" style="left:820px;top:296px" width="15" height="14" viewBox="0 0 15 15"><path d="M4.4 0.4 L10.6 1.4 L11.6 6 L3.2 6 Z" fill="#fff" stroke="#9fa6b4" stroke-width="0.7"/><path d="M5.6 2.2 L9.6 2.8 M5.2 3.8 L10 4.4" stroke="#9db7e6" stroke-width="0.6"/><path d="M0.6 7 L3 5.4 L12.2 5.4 L13.8 7 L13.8 11 L0.6 11 Z" fill="#ededed" stroke="#9a9a9a" stroke-width="0.8"/><path d="M0.6 9.2 L13.8 9.2 L13.8 12 C13.8 13 13 13.4 12 13.4 L2.4 13.4 C1.4 13.4 0.6 13 0.6 12 Z" fill="#d6d6d6" stroke="#8f8f8f" stroke-width="0.7"/><rect x="3" y="11" width="8.4" height="2.6" fill="#fbfbfb" stroke="#aaa" stroke-width="0.5"/><circle cx="11.8" cy="7.8" r="0.8" fill="#35b335"/></svg>
<div class="t" style="left:839px;top:297px;letter-spacing:0.01px;">Print</div>
<div class="b" style="left:799px;top:247px;width:82px;height:43px;"></div>
<div class="" style="left:795px;top:242px;width:91px;height:52px;border:3px solid #0c0c0c;border-radius:8px;"></div>
<div class="t" style="left:799px;width:82px;text-align:center;top:251px;letter-spacing:0.08px;">SITE1</div>
<div class="t" style="left:799px;width:82px;text-align:center;top:264px;letter-spacing:0.06px;">LTL LOS</div>
<div class="t" style="left:799px;width:82px;text-align:center;top:277px;letter-spacing:-0.38px;">ANGELES</div>
<div class="tab" style="left:4px;top:317px;width:191px;height:19px;"></div>
<div class="tab" style="left:194px;top:317px;width:183px;height:19px;"></div>
<div class="tab" style="left:376px;top:317px;width:171px;height:19px;"></div>
<div class="tab" style="left:546px;top:317px;width:179px;height:19px;"></div>
<div class="tab" style="left:724px;top:317px;width:158px;height:19px;"></div>
<div class="t" style="left:97px;top:321px;letter-spacing:-0.27px;">Custom Def’s</div>
<div class="t" style="left:289px;top:321px;letter-spacing:-0.07px;">OS&amp;D/POD</div>
<div class="t" style="left:441px;top:321px;letter-spacing:-0.24px;">Customs</div>
<div class="t" style="left:610px;top:321px;letter-spacing:-0.14px;">User Def’s</div>
<div class="t" style="left:788px;top:321px;">LTL</div>
<div class="tab" style="left:75px;top:335px;width:57px;height:19px;"></div>
<div class="tab" style="left:131px;top:335px;width:62px;height:19px;"></div>
<div class="tab" style="left:192px;top:335px;width:57px;height:19px;"></div>
<div class="tab" style="left:248px;top:335px;width:62px;height:19px;"></div>
<div class="tab" style="left:309px;top:335px;width:58px;height:19px;"></div>
<div class="tab" style="left:366px;top:335px;width:57px;height:19px;"></div>
<div class="tab" style="left:422px;top:335px;width:63px;height:19px;"></div>
<div class="tab" style="left:484px;top:335px;width:56px;height:19px;"></div>
<div class="tab" style="left:539px;top:335px;width:55px;height:19px;"></div>
<div class="tab" style="left:593px;top:335px;width:71px;height:19px;"></div>
<div class="tab" style="left:663px;top:335px;width:78px;height:19px;"></div>
<div class="tab" style="left:740px;top:335px;width:88px;height:19px;"></div>
<div class="tab" style="left:827px;top:335px;width:55px;height:19px;"></div>
<div class="t" style="left:90px;top:339px;letter-spacing:-0.22px;">Details</div>
<div class="t" style="left:148px;top:339px;letter-spacing:0.28px;">Trace#</div>
<div class="t" style="left:209px;top:339px;letter-spacing:0.00px;">Status</div>
<div class="t" style="left:266px;top:339px;letter-spacing:0.01px;">Quotes</div>
<div class="t" style="left:335px;top:339px;">I/P</div>
<div class="t" style="left:385px;top:339px;letter-spacing:-0.51px;">Billing</div>
<div class="t" style="left:433px;top:339px;letter-spacing:0.05px;">Drv Pay</div>
<div class="t" style="left:497px;top:339px;letter-spacing:-0.18px;">COD</div>
<div class="t" style="left:551px;top:339px;">GL</div>
<div class="t" style="left:611px;top:339px;letter-spacing:-0.14px;">Acc Chgs</div>
<div class="t" style="left:680px;top:339px;letter-spacing:-0.04px;">InterModal</div>
<div class="t" style="left:757px;top:339px;letter-spacing:-0.07px;">Dang. Goods</div>
<div class="t" style="left:839px;top:339px;letter-spacing:-0.18px;">SLM</div>
<div class="wh" style="left:2px;top:354px;width:880px;height:3px;"></div>
<div class="wh" style="left:2px;top:354px;width:3px;height:115px;"></div>
<div class="wh" style="left:2px;top:333px;width:73px;height:23px;border-right:1px solid #d9d9d9;"></div>
<div class="t" style="left:14px;top:337px;letter-spacing:-0.43px;">Summary</div>
<div class="gb" style="left:5px;top:363px;width:876px;height:117px;"></div>
<div class="t lb" style="left:11px;top:358px;letter-spacing:-0.43px;">Summary</div>
<div class="t" style="right:747px;top:374px;letter-spacing:-0.42px;">Commodity</div>
<div class="t" style="right:747px;top:396px;letter-spacing:-0.19px;">Requested Equipment</div>
<div class="t" style="right:747px;top:418px;letter-spacing:-0.11px;">Operations Code</div>
<div class="t d" style="right:747px;top:440px;letter-spacing:0.16px;">Project/ Job No</div>
<div class="ro" style="left:144px;top:369px;width:121px;height:21px;"></div>
<div class="t" style="left:147px;top:373px;letter-spacing:-0.00px;">FRESH</div>
<div class="in" style="left:144px;top:391px;width:121px;height:21px;border-color:#0078d7;"></div>
<div class="" style="left:148px;top:395px;width:1px;height:13px;background:#000;"></div>
<svg class="ic" style="left:246px;top:396px" width="13" height="13" viewBox="0 0 13 13"><rect x="0.5" y="0.5" width="9.4" height="11.2" rx="1.8" fill="url(#dbg)" stroke="#6a73bc"/><path d="M7 0.8 L9 0.8 L9.6 1.6 L9.6 5 Z" fill="#2c3784"/><line x1="9" y1="9" x2="12" y2="12" stroke="#ee7a22" stroke-width="2.4" stroke-linecap="round"/><line x1="9.6" y1="9.6" x2="11.8" y2="11.8" stroke="#f8c83c" stroke-width="0.8" stroke-dasharray="0.8 0.8"/><circle cx="6.5" cy="6.3" r="2.9" fill="#b4e4f8" stroke="#4a4f5c" stroke-width="1.1"/></svg>
<div class="in" style="left:144px;top:413px;width:121px;height:21px;"></div>
<div class="t" style="left:147px;top:417px;">LTL</div>
<svg class="ic" style="left:246px;top:418px" width="13" height="13" viewBox="0 0 13 13"><rect x="0.5" y="0.5" width="9.4" height="11.2" rx="1.8" fill="url(#dbg)" stroke="#6a73bc"/><path d="M7 0.8 L9 0.8 L9.6 1.6 L9.6 5 Z" fill="#2c3784"/><line x1="9" y1="9" x2="12" y2="12" stroke="#ee7a22" stroke-width="2.4" stroke-linecap="round"/><line x1="9.6" y1="9.6" x2="11.8" y2="11.8" stroke="#f8c83c" stroke-width="0.8" stroke-dasharray="0.8 0.8"/><circle cx="6.5" cy="6.3" r="2.9" fill="#b4e4f8" stroke="#4a4f5c" stroke-width="1.1"/></svg>
<div class="dis" style="left:144px;top:435px;width:121px;height:21px;"></div>
<svg class="ic" style="left:246px;top:440px" width="13" height="13" viewBox="0 0 13 13"><rect x="0.5" y="0.5" width="9" height="11" rx="1.5" fill="#e2e2e2" stroke="#b4b4b4"/><line x1="8.6" y1="8.6" x2="12" y2="12" stroke="#c4c4c4" stroke-width="2.2" stroke-linecap="round"/><circle cx="6.5" cy="6" r="3.3" fill="#ececec" stroke="#a8a8a8" stroke-width="1.1"/></svg>
<div class="t" style="left:17px;top:458px;letter-spacing:-0.20px;">Pieces</div>
<div class="ro" style="left:51px;top:453px;width:65px;height:21px;"></div>
<div class="t" style="right:776px;top:457px;">6</div>
<div class="t" style="left:147px;top:462px;letter-spacing:-0.49px;">Volume</div>
<div class="ro" style="left:185px;top:457px;width:65px;height:21px;"></div>
<div class="t" style="right:641px;top:461px;">0</div>
<div class="cb" style="left:272px;top:464px;width:13px;height:13px;"></div>
<div class="t" style="left:288px;top:465px;">CSA</div>
<div class="t" style="right:494px;top:374px;letter-spacing:-0.04px;">Current Status</div>
<div class="t" style="right:494px;top:396px;letter-spacing:-0.27px;">Changed Time</div>
<div class="t" style="right:494px;top:418px;letter-spacing:-0.05px;">Sales Rep/Agent</div>
<div class="t" style="right:494px;top:440px;letter-spacing:-0.09px;">Carrier Agent</div>
<div class="t" style="right:494px;top:462px;letter-spacing:0.11px;">Trace #</div>
<div class="ro" style="left:397px;top:369px;width:121px;height:21px;"></div>
<div class="t" style="left:400px;top:373px;letter-spacing:0.19px;">AVAIL</div>
<div class="ro" style="left:397px;top:391px;width:121px;height:21px;"></div>
<div class="t" style="left:400px;top:395px;letter-spacing:-0.08px;">4/24/2019 1:46:01 AM</div>
<div class="in" style="left:397px;top:413px;width:121px;height:21px;"></div>
<svg class="ic" style="left:498px;top:418px" width="13" height="13" viewBox="0 0 13 13"><rect x="0.5" y="0.5" width="9.4" height="11.2" rx="1.8" fill="url(#dbg)" stroke="#6a73bc"/><path d="M7 0.8 L9 0.8 L9.6 1.6 L9.6 5 Z" fill="#2c3784"/><line x1="9" y1="9" x2="12" y2="12" stroke="#ee7a22" stroke-width="2.4" stroke-linecap="round"/><line x1="9.6" y1="9.6" x2="11.8" y2="11.8" stroke="#f8c83c" stroke-width="0.8" stroke-dasharray="0.8 0.8"/><circle cx="6.5" cy="6.3" r="2.9" fill="#b4e4f8" stroke="#4a4f5c" stroke-width="1.1"/></svg>
<div class="in" style="left:397px;top:435px;width:121px;height:21px;"></div>
<svg class="ic" style="left:498px;top:440px" width="13" height="13" viewBox="0 0 13 13"><rect x="0.5" y="0.5" width="9.4" height="11.2" rx="1.8" fill="url(#dbg)" stroke="#6a73bc"/><path d="M7 0.8 L9 0.8 L9.6 1.6 L9.6 5 Z" fill="#2c3784"/><line x1="9" y1="9" x2="12" y2="12" stroke="#ee7a22" stroke-width="2.4" stroke-linecap="round"/><line x1="9.6" y1="9.6" x2="11.8" y2="11.8" stroke="#f8c83c" stroke-width="0.8" stroke-dasharray="0.8 0.8"/><circle cx="6.5" cy="6.3" r="2.9" fill="#b4e4f8" stroke="#4a4f5c" stroke-width="1.1"/></svg>
<div class="ro" style="left:397px;top:457px;width:121px;height:21px;"></div>
<div class="t" style="left:542px;top:441px;letter-spacing:-0.09px;">Latest Pick Up By for Container</div>
<div class="in" style="left:543px;top:457px;width:122px;height:21px;"></div>
<svg class="ic" style="left:645px;top:460px" width="15" height="15" viewBox="0 0 15 15"><rect x="0.5" y="5.5" width="9" height="8" fill="#fff" stroke="#7b86c8"/><rect x="1" y="6" width="4.6" height="1.4" fill="#777c8c"/><text x="1.6" y="12.3" font-size="6" font-weight="bold" fill="#f0641e" font-family="Liberation Sans,sans-serif">12</text><circle cx="9.9" cy="5" r="4.1" fill="#cdeaf6" stroke="#8a9096" stroke-width="1.2"/><path d="M8.2 3.4 L9.9 5.4 L11.7 3.4" fill="none" stroke="#444" stroke-width="1"/></svg>
<div class="b" style="left:766px;top:374px;width:111px;height:23px;"></div>
<svg class="ic" style="left:799px;top:379px" width="14" height="14" viewBox="0 0 14 14"><path d="M1.6 2 L10.6 0.6 L13 11 L4 13 Z" fill="#fbe27a" stroke="#d6b84a" stroke-width="0.6"/><path d="M3.4 4.2 L10.4 3 M3.9 6.2 L10.9 5 M4.4 8.2 L11.4 7 M4.9 10.2 L11.9 9" stroke="#c9a63a" stroke-width="0.7" fill="none"/></svg>
<div class="t" style="left:817px;top:380px;letter-spacing:0.04px;">Notes</div>
<div class="b" style="left:767px;top:398px;width:111px;height:23px;"></div>
<svg class="ic" style="left:774px;top:403px" width="14" height="14" viewBox="0 0 14 14"><path d="M1.6 2 L10.6 0.6 L13 11 L4 13 Z" fill="#fbe27a" stroke="#d6b84a" stroke-width="0.6"/><path d="M3.4 4.2 L10.4 3 M3.9 6.2 L10.9 5 M4.4 8.2 L11.4 7 M4.9 10.2 L11.9 9" stroke="#c9a63a" stroke-width="0.7" fill="none"/></svg>
<div class="t" style="left:792px;top:404px;letter-spacing:-0.15px;">Ship Instructions</div>
<div class="b" style="left:767px;top:422px;width:111px;height:23px;"></div>
<div class="t" style="left:789px;top:428px;letter-spacing:-0.13px;">Match Advice</div>
</div></body></html>
